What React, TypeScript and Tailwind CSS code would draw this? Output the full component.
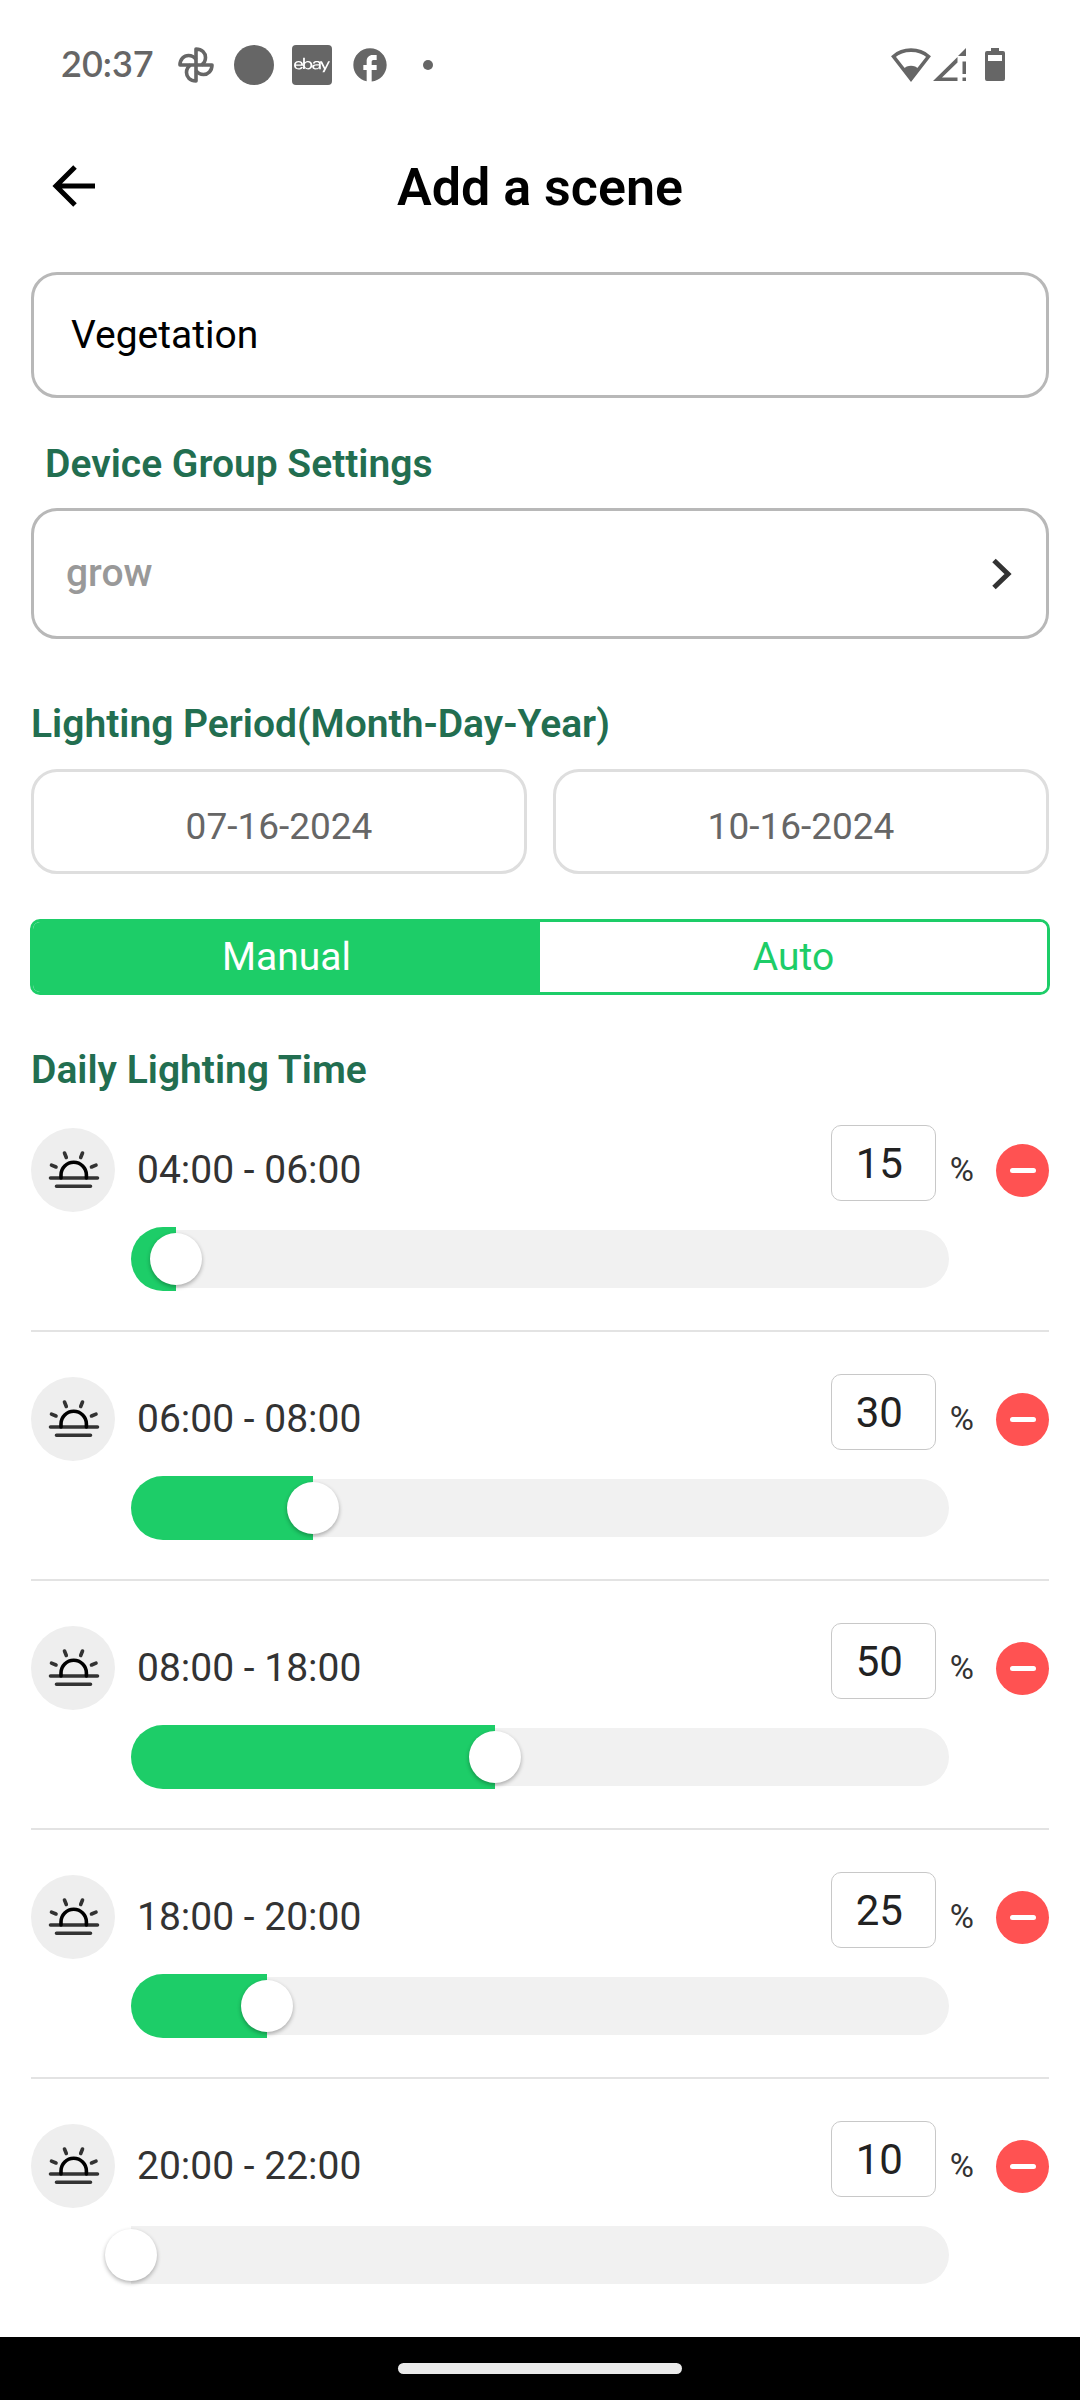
import { useState } from "react";
import { MdFacebook } from "react-icons/md";
import { SiEbay } from "react-icons/si";

const MIN_LEVEL = 10;
const MAX_LEVEL = 100;

type Slot = { id: string; range: string; level: number };

const INITIAL_SLOTS: Slot[] = [
  { id: "s1", range: "04:00 - 06:00", level: 15 },
  { id: "s2", range: "06:00 - 08:00", level: 30 },
  { id: "s3", range: "08:00 - 18:00", level: 50 },
  { id: "s4", range: "18:00 - 20:00", level: 25 },
  { id: "s5", range: "20:00 - 22:00", level: 10 },
];

function PinwheelIcon() {
  return (
    <svg viewBox="0 0 36 36" className="size-9" fill="none" stroke="currentColor" strokeWidth="3.6" strokeLinejoin="round" aria-hidden="true">
      <path d="M18 18V2c6 0 9.500 4 9.500 8.500 0 3-1.500 5.800-4 7.500" />
      <path d="M18 18h16c0 6-4 9.500-8.500 9.500-3 0-5.800-1.500-7.500-4" />
      <path d="M18 18v16c-6 0-9.500-4-9.500-8.500 0-3 1.500-5.800 4-7.500" />
      <path d="M18 18H2c0-6 4-9.500 8.500-9.500 3 0 5.800 1.500 7.500 4" />
    </svg>
  );
}

function WifiIcon() {
  return (
    <svg viewBox="0 0 40 34" className="h-[34px] w-10" aria-hidden="true">
      <path d="M2.500 8.500C12 0 28 0 37.500 8.500L20 31Z" fill="none" stroke="currentColor" strokeWidth="3.600" />
      <path d="M20 33 12 21c4.500-4.500 11.500-4.500 16 0Z" fill="currentColor" />
    </svg>
  );
}

function SignalIcon() {
  return (
    <svg viewBox="0 0 34 34" className="size-[34px]" fill="currentColor" aria-hidden="true">
      <path d="M33 0v8h-8Z" />
      <path fillRule="evenodd" d="M24.500 9v5.500L9 29.500H24.500v3.500H0Z" />
      <path d="M29.500 13.500H33V26h-3.500ZM29.500 29.500H33v3.500h-3.500Z" />
    </svg>
  );
}

function BatteryIcon() {
  return (
    <svg viewBox="0 0 20 34" className="h-[34px] w-5" fill="currentColor" aria-hidden="true">
      <path fillRule="evenodd" d="M6 0h8v3h4a2 2 0 0 1 2 2v26a2 2 0 0 1-2 2H2a2 2 0 0 1-2-2V5a2 2 0 0 1 2-2h4ZM3 7v6h14V7Z" />
    </svg>
  );
}

function StatusBar() {
  return (
    <div className="flex h-[130px] items-center justify-between pr-[75px] pl-[61px] text-[#666666]">
      <div className="flex items-center">
        <span className="w-[117px] pb-1 font-['Lato'] text-[36px] leading-none font-semibold">20:37</span>
        <PinwheelIcon />
        <span className="ml-5 size-10 rounded-full bg-current" />
        <span className="ml-[18px] flex size-10 items-center justify-center rounded-sm bg-current">
          <SiEbay className="size-9 text-white" aria-label="ebay" />
        </span>
        <MdFacebook className="ml-[18px] size-10" aria-label="Facebook" />
        <span className="ml-[33px] size-2.5 rounded-full bg-current" />
      </div>
      <div className="flex items-center">
        <WifiIcon />
        <span className="ml-0.5 flex"><SignalIcon /></span>
        <span className="ml-[18px] flex"><BatteryIcon /></span>
      </div>
    </div>
  );
}

function SunriseBadge() {
  return (
    <span className="flex size-[84px] shrink-0 items-center justify-center rounded-full bg-[#eeeeee]">
      <svg viewBox="0 0 84 84" className="size-[84px]" fill="none" strokeLinecap="round" aria-hidden="true">
        <g stroke="#333333" strokeWidth="3.600">
          <path d="M19.500 50h47M25.500 58.300h34" />
          <path d="M20.500 37.200l4.500 1.800M65 37.200l-4.500 1.800M33.500 25l1.800 4.500M51.500 25l-1.800 4.500" />
        </g>
        <path d="M30 50v-3a12.700 12.700 0 0 1 25.400 0v3" stroke="#000000" strokeWidth="3.600" />
      </svg>
    </span>
  );
}

function SlotRow({ slot, onLevel, onRemove }: { slot: Slot; onLevel: (level: number) => void; onRemove: () => void }) {
  const percent = Math.max(0, ((slot.level - MIN_LEVEL) / (MAX_LEVEL - MIN_LEVEL)) * 100);
  return (
    <li className="border-b-2 border-[#e3e3e3] pt-[42px] pb-[39px] first:pt-0 last:border-b-0">
      <div className="flex h-[90px] items-center">
        <SunriseBadge />
        <span className="ml-[22px] text-[39px] leading-none text-[#333333]">{slot.range}</span>
        <label className="ml-auto flex h-full items-center text-[33px] text-[#333333]">
          <input
            type="text"
            inputMode="numeric"
            aria-label={`Brightness for ${slot.range}`}
            value={slot.level}
            onChange={(e) => onLevel(Math.min(MAX_LEVEL, Number(e.target.value) || 0))}
            className="mr-3.5 h-[76px] w-[105px] self-start rounded-[10px] border border-[#c8c8c8] pr-2 text-center text-[42px] text-[#222222] outline-none"
          />
          %
        </label>
        <button
          type="button"
          aria-label={`Remove ${slot.range}`}
          onClick={onRemove}
          className="ml-[22px] flex size-[53px] items-center justify-center rounded-full bg-[#ff5252]"
        >
          <span className="h-[5px] w-[26px] rounded-full bg-white" />
        </button>
      </div>
      <div className="relative mx-[100px] mt-3 flex h-16 items-center">
        <div className="h-full rounded-l-full bg-[#1dcd68]" style={{ width: `${percent}%` }} />
        <div className="h-[58px] flex-1 rounded-r-full bg-[#f1f1f1]" />
        <input
          type="range"
          min={MIN_LEVEL}
          max={MAX_LEVEL}
          value={slot.level}
          aria-label={`Brightness slider for ${slot.range}`}
          onChange={(e) => onLevel(Number(e.target.value))}
          className="absolute inset-y-0 -left-[26px] m-0 w-[calc(100%+52px)] appearance-none bg-transparent outline-none [&::-webkit-slider-thumb]:size-[52px] [&::-webkit-slider-thumb]:appearance-none [&::-webkit-slider-thumb]:rounded-full [&::-webkit-slider-thumb]:bg-white [&::-webkit-slider-thumb]:shadow-[0_2px_4px_rgba(0,0,0,0.3)]"
        />
      </div>
    </li>
  );
}

export default function App() {
  const [name, setName] = useState("Vegetation");
  const [mode, setMode] = useState<"Manual" | "Auto">("Manual");
  const [slots, setSlots] = useState(INITIAL_SLOTS);

  return (
    <div className="flex min-h-screen flex-col bg-white font-['Roboto',sans-serif] text-black">
      <StatusBar />
      <header className="grid grid-cols-[1fr_auto_1fr] items-center px-12 pt-5">
        <button type="button" aria-label="Back" className="w-fit">
          <svg viewBox="0 0 52 52" className="size-[52px]" fill="none" stroke="currentColor" strokeWidth="5" aria-hidden="true">
            <path d="M27 7 8 26l19 19M8 26h39" />
          </svg>
        </button>
        <h1 className="pt-1 text-[52px] leading-[68px] font-semibold">Add a scene</h1>
      </header>

      <main className="flex flex-1 flex-col px-[31px] pt-[50px]">
        <input
          type="text"
          aria-label="Scene name"
          value={name}
          onChange={(e) => setName(e.target.value)}
          className="h-[126px] w-full rounded-[26px] border-[3px] border-[#b8b8b8] px-[37px] text-[39px] outline-none"
        />

        <h2 id="group-label" className="mt-[42px] pl-3.5 text-[39px] leading-[48px] font-semibold text-[#226e50]">Device Group Settings</h2>
        <button
          type="button"
          aria-describedby="group-label"
          className="mt-5 flex h-[131px] items-center justify-between rounded-[26px] border-[3px] border-[#b8b8b8] pr-[33px] pl-8 text-[39px] font-medium text-[#999999]"
        >
          grow
          <svg viewBox="0 0 22 32" className="h-8 w-[22px] text-[#333333]" fill="none" stroke="currentColor" strokeWidth="5" aria-hidden="true">
            <path d="M3 2.500 17 16 3 29.500" />
          </svg>
        </button>

        <h2 className="mt-[61px] text-[39px] leading-[48px] font-semibold text-[#226e50]">Lighting Period(Month-Day-Year)</h2>
        <div className="mt-[21px] grid grid-cols-2 gap-[26px] text-[37px] text-[#666666]">
          <button type="button" aria-label="Start date 07-16-2024" className="h-[105px] rounded-[26px] border-[3px] border-[#dedede] pt-2.5">07-16-2024</button>
          <button type="button" aria-label="End date 10-16-2024" className="h-[105px] rounded-[26px] border-[3px] border-[#dedede] pt-2.5">10-16-2024</button>
        </div>

        <div className="-mx-px mt-[45px] grid h-[76px] grid-cols-2 overflow-hidden rounded-[10px] border-[3px] border-[#1dcd68] text-[39px]">
          {(["Manual", "Auto"] as const).map((m) => (
            <button
              key={m}
              type="button"
              aria-pressed={mode === m}
              onClick={() => setMode(m)}
              className={mode === m ? "bg-[#1dcd68] leading-none text-white" : "bg-white leading-none text-[#1dcd68]"}
            >
              {m}
            </button>
          ))}
        </div>

        <h2 className="mt-[51px] text-[39px] leading-[48px] font-semibold text-[#226e50]">Daily Lighting Time</h2>
        <ul className="mt-[31px]">
          {slots.map((slot) => (
            <SlotRow
              key={slot.id}
              slot={slot}
              onLevel={(level) => setSlots(slots.map((s) => (s.id === slot.id ? { ...s, level } : s)))}
              onRemove={() => setSlots(slots.filter((s) => s.id !== slot.id))}
            />
          ))}
        </ul>
      </main>

      <footer className="flex h-[63px] items-center justify-center bg-black">
        <span className="h-[11px] w-[284px] rounded-full bg-[#eaeaea]" />
      </footer>
    </div>
  );
}
